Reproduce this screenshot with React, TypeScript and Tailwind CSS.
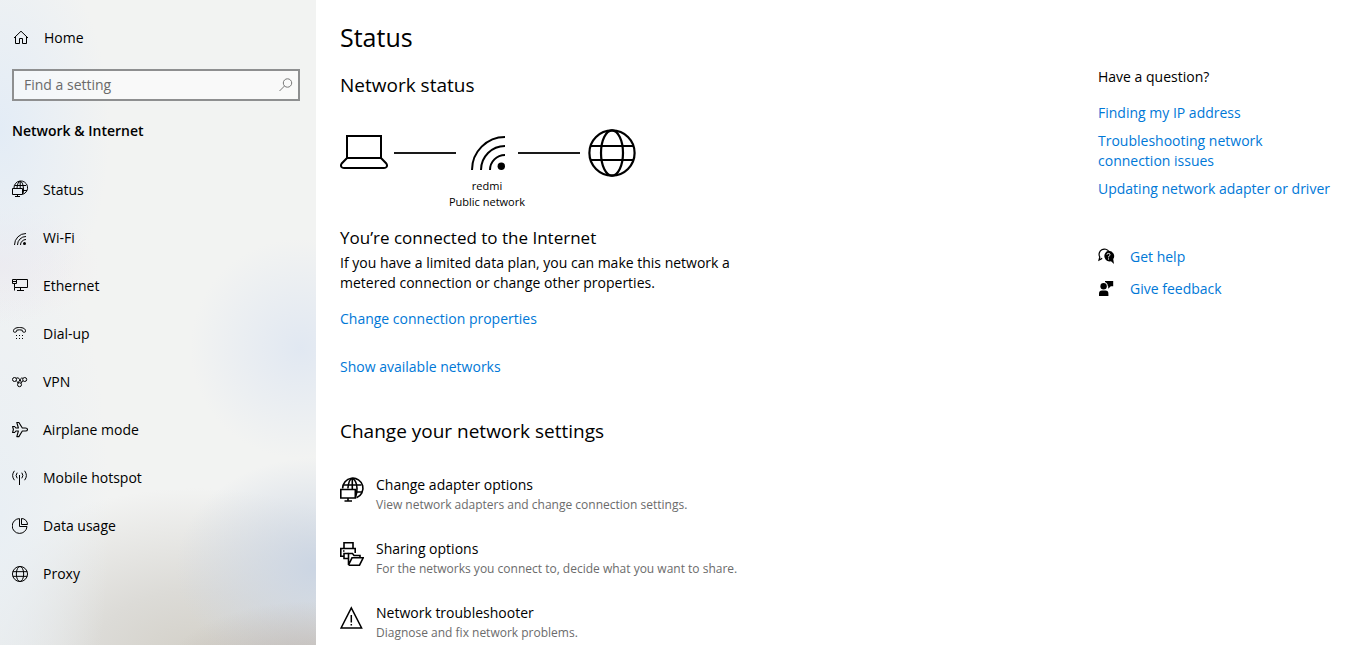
import React, { useState } from 'react';

type IconProps = { className?: string; strokeWidth?: number };

const GlobeIcon = ({ className = 'size-4', strokeWidth = 3 }: IconProps) => (
  <svg viewBox="0 0 48 48" className={className} fill="none" stroke="currentColor" strokeWidth={strokeWidth} aria-hidden="true">
    <circle cx="24" cy="24" r="22.6" />
    <ellipse cx="24" cy="24" rx="11" ry="22.6" />
    <path d="M2.5 17H45.5M2.5 31H45.5" />
  </svg>
);

const WifiIcon = () => (
  <svg viewBox="0 0 34 34" className="ml-[15px] size-[34px]" fill="none" stroke="currentColor" strokeWidth="2" aria-hidden="true">
    <path d="M1 34A33 33 0 0 1 34 1M10 34A24 24 0 0 1 34 10M19 34A15 15 0 0 1 34 19" />
    <circle cx="30.3" cy="30.3" r="3.7" fill="currentColor" stroke="none" />
  </svg>
);

// Monitor in front of a globe, nav size
const StatusIcon = () => (
  <svg viewBox="0 0 16 16" className="size-4 overflow-visible" fill="none" stroke="currentColor" aria-hidden="true">
    <path d="M2 6A6.8 6.8 0 1 1 11 12.2" />
    <path d="M5 6Q5.6-.5 8.2-.5T11.4 6Q11.8 9 11 11.5M2.5 3.5H14M11 8.5H15M8.2-.5V6" />
    <path d="M.5 6.5H10.5V12.5H.5ZM5.5 12.5V14.5M3 14.5H8" />
  </svg>
);

const AdapterIcon = () => (
  <svg viewBox="0 0 24 24" className="size-6 overflow-visible" fill="none" stroke="currentColor" strokeWidth="1.6" aria-hidden="true">
    <path d="M2.6 10.5A10.2 10.2 0 1 1 16.5 19.8" />
    <path d="M7.9 10.5C8.4 4.5 10.3 .8 12.3 .8S17 4.5 17 10.5C17 13.5 16.6 16.5 15.6 19" />
    <path d="M3.6 7H21.4M15.5 14H22M12.3 .8V11" />
    <path d="M.8 11.5H15.3V20H.8ZM8 20V23M4.5 23H12" />
  </svg>
);

const HomeIcon = () => (
  <svg viewBox="0 0 16 16" className="size-4 overflow-visible" fill="none" stroke="currentColor" aria-hidden="true">
    <path d="M2 8L9 1.2L16 8M3.5 6.8V13.5H7.5V8.5H10.5V13.5H14.5V6.8" />
  </svg>
);

const SmallWifiIcon = () => (
  <svg viewBox="0 0 16 16" className="size-4" fill="none" stroke="currentColor" aria-hidden="true">
    <path d="M2.5 15A11.5 11.5 0 0 1 14 3.5M5.5 15A8.5 8.5 0 0 1 14 6.5M8.5 15A5.5 5.5 0 0 1 14 9.5" />
    <circle cx="12.5" cy="13.5" r="1.5" fill="currentColor" stroke="none" />
  </svg>
);

const EthernetIcon = () => (
  <svg viewBox="0 0 16 16" className="size-4" fill="none" stroke="currentColor" aria-hidden="true">
    <path d="M4.5 1.5H15.5V9.5H2.5V5.5M8.5 9.5V12.5M5 12.5H12M.5 1.5H4.5V5.5H.5ZM1 3.5H4M2.5 9.5V12.5" />
  </svg>
);

const DialUpIcon = () => (
  <svg viewBox="0 0 16 16" className="size-4" fill="none" stroke="currentColor" aria-hidden="true">
    <path d="M1.5 5.5C1 2.8 4 1.5 7.5 1.5S14 2.8 13.5 5.5Q13.4 6.3 12.5 6.2L11 6Q10.3 5.8 10.3 4.8V4.2Q7.5 3.4 4.7 4.2V4.8Q4.7 5.8 4 6L2.5 6.2Q1.6 6.3 1.5 5.5Z" />
    <path d="M4 9.5H5M7 9.5H8M10 9.5H11M4 12.5H5M7 12.5H8M10 12.5H11" />
  </svg>
);

const VpnIcon = () => (
  <svg viewBox="0 0 16 16" className="size-4" fill="none" stroke="currentColor" aria-hidden="true">
    <circle cx="2.5" cy="5.5" r="2" />
    <circle cx="12.7" cy="5.5" r="2" />
    <circle cx="7.5" cy="10.7" r="2" />
    <path d="M4.2 4.2Q6 3 7.6 5L9.3 8M4.3 6.8Q5.5 7.5 6 9M10.8 4.2Q9.5 3.5 8.3 5.2L5.8 9.3M11 6.8Q9.8 7.5 9.2 9.3" />
  </svg>
);

const AirplaneIcon = () => (
  <svg viewBox="0 0 16 16" className="size-4" fill="none" stroke="currentColor" strokeWidth="1.1" strokeLinejoin="round" aria-hidden="true">
    <path d="M.6 4.5H2.6L3.9 6H6.4L4.8.5H6.9L10.3 6H13.5C15 6 15.5 6.8 15.5 7.5S15 9 13.5 9H10.3L6.9 14.6H4.8L6.4 9H3.9L2.6 10.5H.6L1.4 7.5Z" />
  </svg>
);

const HotspotIcon = () => (
  <svg viewBox="0 0 16 16" className="size-4" fill="none" stroke="currentColor" aria-hidden="true">
    <path d="M7.5 5V15M5.2 2.7Q3 5.5 5.2 8.3M9.8 2.7Q12 5.5 9.8 8.3M2.4.8Q-1.2 5.5 2.4 10.2M12.6.8Q16.2 5.5 12.6 10.2" />
  </svg>
);

const DataUsageIcon = () => (
  <svg viewBox="0 0 16 16" className="size-4" fill="none" stroke="currentColor" aria-hidden="true">
    <path d="M7.5.6A7.4 7.4 0 1 0 15 8.5H7.5Z" />
    <path d="M9.5.5V6.5H15.5A6 6 0 0 0 9.5.5Z" />
  </svg>
);

const LaptopIcon = () => (
  <svg viewBox="0 0 48 48" className="size-12" fill="none" stroke="currentColor" strokeWidth="2" aria-hidden="true">
    <path d="M7 29V7H41V29M7 29H41L46.3 34.5Q47.6 36.5 46.5 38Q45.8 39 44 39H4Q2.2 39 1.5 38Q.4 36.5 1.7 34.5Z" />
  </svg>
);

const SharingIcon = () => (
  <svg viewBox="0 0 24 24" className="size-6" fill="none" stroke="currentColor" strokeWidth="1.6" aria-hidden="true">
    <path d="M4 6.5V.8H13V6.5M4 14.2H.8V6.5H15.2V11M8 16.5H4V11.5H8.5M3 9H4.5" />
    <path d="M8.5 23V11.5H12.5L14 13.5H20V15.5M8.5 23L12 15.8H23.2L19.5 23.2H8.5" />
  </svg>
);

const WarningIcon = () => (
  <svg viewBox="0 0 24 24" className="size-6" fill="none" stroke="currentColor" strokeWidth="1.5" aria-hidden="true">
    <path d="M11.3 1.8L21.6 22H1.1ZM11.3 9V16.5M11.3 18V19.5" />
  </svg>
);

const HelpIcon = () => (
  <svg viewBox="0 0 16 16" className="size-4 overflow-visible" fill="none" stroke="currentColor" aria-hidden="true">
    <path d="M4.2 9.4L1 11L1.8 8A5.2 5.2 0 1 1 11 2.7" strokeWidth="1.2" />
    <path d="M10.5 1.8A5.3 5.3 0 1 0 13 12.3L16 14.9L15.2 10.1A5.3 5.3 0 0 0 10.5 1.8Z" fill="currentColor" stroke="none" />
    <path d="M9 5.6Q9 4.4 10.5 4.4T12 5.7Q12 6.5 11.2 7T10.5 8.4M10.5 9.4V10.5" stroke="white" />
  </svg>
);

const FeedbackIcon = () => (
  <svg viewBox="0 0 16 16" className="size-4" fill="currentColor" aria-hidden="true">
    <circle cx="5.6" cy="5.2" r="3.2" />
    <path d="M1 15V12.7Q1 9.4 4 9.4H7.4Q10.4 9.4 10.4 12.7V15ZM7 0H15.2V5.3H12.8L10.2 7.7V5.3H9.8A4.6 4.6 0 0 0 7 1Z" />
  </svg>
);

const SearchIcon = () => (
  <svg viewBox="0 0 16 16" className="size-4" fill="none" stroke="currentColor" aria-hidden="true">
    <circle cx="9.5" cy="6" r="4.2" />
    <path d="M6.5 9L1.5 14" />
  </svg>
);

const navItems = [
  { label: 'Status', icon: <StatusIcon /> },
  { label: 'Wi-Fi', icon: <SmallWifiIcon /> },
  { label: 'Ethernet', icon: <EthernetIcon /> },
  { label: 'Dial-up', icon: <DialUpIcon /> },
  { label: 'VPN', icon: <VpnIcon /> },
  { label: 'Airplane mode', icon: <AirplaneIcon /> },
  { label: 'Mobile hotspot', icon: <HotspotIcon /> },
  { label: 'Data usage', icon: <DataUsageIcon /> },
  { label: 'Proxy', icon: <GlobeIcon /> },
];

const settings = [
  {
    title: 'Change adapter options',
    description: 'View network adapters and change connection settings.',
    icon: <AdapterIcon />,
  },
  {
    title: 'Sharing options',
    description: 'For the networks you connect to, decide what you want to share.',
    icon: <SharingIcon />,
  },
  {
    title: 'Network troubleshooter',
    description: 'Diagnose and fix network problems.',
    icon: <WarningIcon />,
  },
];

const Sidebar = () => {
  const [query, setQuery] = useState('');

  return (
    <aside className="w-[316px] shrink-0 pt-7 pr-4 pl-3 bg-[#f2f3f2] bg-[radial-gradient(ellipse_110px_200px_at_0%_20%,#e3ecf6_0%,transparent_100%),radial-gradient(ellipse_100px_60px_at_0%_41%,#f0ebee_0%,transparent_100%),radial-gradient(ellipse_110px_110px_at_95%_54%,#e1e8f2_0%,transparent_100%),radial-gradient(ellipse_150px_70px_at_100%_104%,#bfb8b3_0%,transparent_100%),radial-gradient(ellipse_140px_110px_at_100%_88%,#cbd5e3_0%,transparent_100%),radial-gradient(ellipse_110px_330px_at_0%_80%,#e9eff4_0%,transparent_100%),radial-gradient(ellipse_260px_170px_at_62%_102%,#d3d0c8_0%,#dcdbd7_40%,transparent_100%)]">
      <a href="#home" className="flex h-5 items-center gap-4">
        <HomeIcon />
        Home
      </a>

      <div className="mt-[21px] flex h-8 items-center border-2 border-[#8e8f90] bg-white/50 pr-1 text-[#777]">
        <input
          type="text"
          aria-label="Find a setting"
          placeholder="Find a setting"
          value={query}
          onChange={(e) => setQuery(e.target.value)}
          className="min-w-0 flex-1 bg-transparent pl-2.5 text-black outline-none placeholder:text-[#6a6a6a]"
        />
        <button type="button" aria-label="Search">
          <SearchIcon />
        </button>
      </div>

      <h2 className="mt-5 font-semibold">Network &amp; Internet</h2>

      <nav className="mt-[25px]">
        {navItems.map((item) => (
          <a key={item.label} href="#" className="flex h-12 items-center gap-[15px]">
            {item.icon}
            {item.label}
          </a>
        ))}
      </nav>
    </aside>
  );
};

const NetworkDiagram = () => (
  <div className="mt-[30px] grid w-fit grid-cols-[54px_62px_62px_62px_56px] items-center">
    <LaptopIcon />
    <hr className="border-t-2 border-[#1a1a1a]" />
    <WifiIcon />
    <hr className="border-t-2 border-[#1a1a1a]" />
    <GlobeIcon className="ml-2 size-12" strokeWidth={2.2} />
    <p className="col-span-3 col-start-2 mt-px text-center text-[11px] leading-4">
      redmi
      <br />
      Public network
    </p>
  </div>
);

const App = () => {
  return (
    <div className="flex min-h-screen bg-white font-['Open_Sans','Noto_Sans',sans-serif] text-[14px] leading-5 text-black">
      <Sidebar />

      <main className="min-w-0 flex-1 pt-[19px] pl-6">
        <h1 className="text-[25px] leading-9">Status</h1>
        <h2 className="mt-4 text-[19px] leading-7">Network status</h2>

        <NetworkDiagram />

        <h3 className="mt-4 text-[17px] leading-6">You’re connected to the Internet</h3>
        <p className="mt-[3px] max-w-[420px]">
          If you have a limited data plan, you can make this network a metered connection or change other properties.
        </p>
        <a href="#" className="mt-4 block w-fit text-[#0078d7]">Change connection properties</a>
        <a href="#" className="mt-7 block w-fit text-[#0078d7]">Show available networks</a>

        <h2 className="mt-10 text-[19px] leading-7">Change your network settings</h2>
        <ul className="mt-[30px] flex flex-col gap-6">
          {settings.map((item) => (
            <li key={item.title}>
              <a href="#" className="flex gap-3">
                <span className="pt-[3px]">{item.icon}</span>
                <span>
                  <span className="block">{item.title}</span>
                  <span className="block text-[12px] text-[#6b6b6b]">{item.description}</span>
                </span>
              </a>
            </li>
          ))}
        </ul>
      </main>

      {/* Help links */}
      <aside className="w-[250px] shrink-0 pt-[67px]">
        <h2>Have a question?</h2>
        <div className="mt-4 flex flex-col gap-2 text-[#0078d7]">
          <a href="#">Finding my IP address</a>
          <a href="#" className="max-w-[200px]">Troubleshooting network connection issues</a>
          <a href="#" className="whitespace-nowrap">Updating network adapter or driver</a>
        </div>

        <div className="mt-12 flex flex-col gap-3">
          <a href="#" className="flex items-center gap-4">
            <HelpIcon />
            <span className="text-[#0078d7]">Get help</span>
          </a>
          <a href="#" className="flex items-center gap-4">
            <FeedbackIcon />
            <span className="text-[#0078d7]">Give feedback</span>
          </a>
        </div>
      </aside>
    </div>
  );
};

export default App;
